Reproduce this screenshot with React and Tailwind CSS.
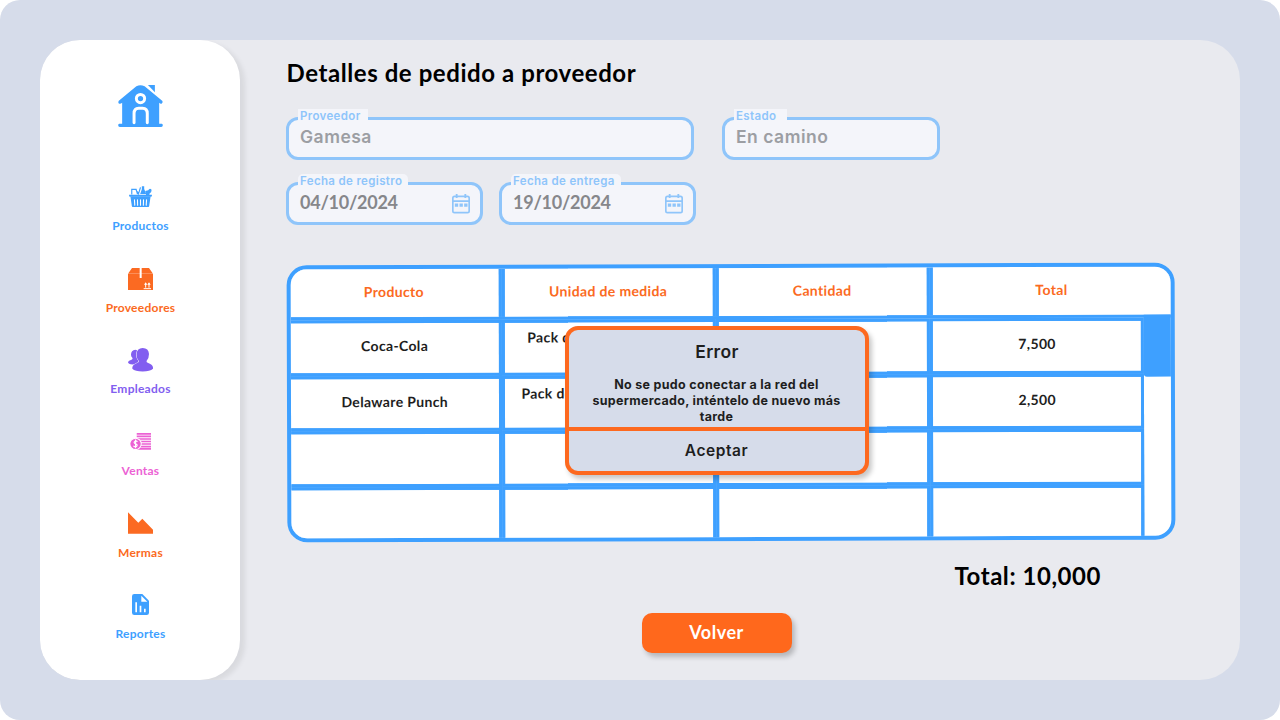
import React from "react";

const HomeIcon = () => (
  <svg viewBox="0 0 135 127" className="h-[42px] w-[45px]" fill="#3ea0ff">
    <path d="M90 0h21v22z" />
    <path d="M55 4Q67-3 80 4L133 48Q136 52 132 56Q128 58 124 54V117H132Q135 118 135 122Q135 127 130 127H5Q0 127 0 122Q0 118 3 117H12V54Q7 58 2 56Q-1 52 2 48Z" />
    <circle cx="67.500" cy="41" r="12.500" fill="none" stroke="#fff" strokeWidth="9" />
    <path d="M48 114V86Q48 70 62 70H74Q88 70 88 86V114" fill="none" stroke="#fff" strokeWidth="9" strokeLinecap="round" />
  </svg>
);

const BasketIcon = () => (
  <svg viewBox="0 0 68 64" className="h-[21.500px] w-[23px]" fill="#3ea0ff">
    <path d="M0 26H68V29Q68 32 65 32H3Q0 32 0 29Z" />
    <path d="M4 31H64L60 58Q59 64 54 64H14Q9 64 8 58Z" />
    <path d="M16 41l1 16M25 41l.5 16M34 41v16M43 41l-.5 16M52 41l-1 16" stroke="#fff" strokeWidth="3.200" strokeLinecap="round" />
    <path d="M8 25V10H21L25 24M20 10L28 23L34 4" fill="none" stroke="#3ea0ff" strokeWidth="3.500" />
    <path d="M38 1h7v8l6 15H33l5-14z" />
    <path d="M48 15l9-2q4-8 9-3q3 8-5 12l-1 6h-9z" />
  </svg>
);

const BoxIcon = () => (
  <svg viewBox="0 0 75 66" className="mt-px h-[22px] w-[25px]" fill="#fb6a22">
    <path d="M12 0H35V17H0ZM41 0H63L75 17H41Z" />
    <path d="M0 18H35V30H41V18H75V66H0Z" />
    <path d="M47 62h22M53 59v-13M63 59v-13" stroke="#fff" strokeWidth="3" />
    <path d="M48 50l5-7 5 7zM58 50l5-7 5 7z" fill="#fff" />
  </svg>
);

const PeopleIcon = () => (
  <svg viewBox="0 0 75 70" className="h-[23.500px] w-[25px]" fill="#825ef0">
    <path d="M9 20Q9 6 22 5Q32 6 34 18L30 47L14 49Q0 49 0 42Q1 37 12 34Q15 32 13 29Q9 26 9 20Z" />
    <path
      d="M26 18Q27 0 44 0Q62 0 63 18Q63 31 56 38Q54 43 59 44Q74 49 75 58V62Q66 70 44 70Q21 70 13 62V58Q14 49 29 44Q34 43 32 38Q25 30 26 18Z"
      stroke="#fff"
      strokeWidth="3"
      paintOrder="stroke"
    />
  </svg>
);

const SalesIcon = () => (
  <svg viewBox="0 0 64 50" className="h-[17px] w-[21.500px]" fill="#ec62d4">
    <path d="M20 2.500H64M20 10H64M20 17.500H64M20 25H64M20 32.500H64M20 40H64M20 47H64" stroke="#ec62d4" strokeWidth="5" />
    <circle cx="16.500" cy="32" r="17" stroke="#fff" strokeWidth="3" />
    <path d="M22 26Q19 22 15 24Q9 28 16 32Q24 34 20 39Q15 43 10 38M16.500 19V45" fill="none" stroke="#fff" strokeWidth="3.500" />
  </svg>
);

const LossIcon = () => (
  <svg viewBox="0 0 75 65" className="h-[22px] w-[25px]" fill="#fb6a22">
    <path d="M0 0L31 32L43 20L75 53V65H0Z" />
  </svg>
);

const ReportIcon = () => (
  <svg viewBox="0 0 51 63" className="h-[21px] w-[17px]">
    <path d="M7 0H31L51 20V56Q51 63 44 63H7Q0 63 0 56V7Q0 0 7 0Z" fill="#3ea0ff" />
    <path d="M28 5V23H46Z" fill="#fff" />
    <path d="M12.500 25V55M25.500 35V55M38.500 44V55" stroke="#fff" strokeWidth="5" />
  </svg>
);

const CalendarIcon = () => (
  <svg viewBox="0 0 54 58" className="mt-px h-[19.500px] w-[18px]" fill="none" stroke="#8fc5fa">
    <rect x="2.500" y="7" width="49" height="48.500" rx="5" strokeWidth="5" />
    <path d="M2 21H52M14 0V12M40 0V12" strokeWidth="5.500" />
    <path d="M8.500 33H46.500" strokeWidth="10" strokeDasharray="10 4" />
  </svg>
);

const menu = [
  { label: "Productos", Icon: BasketIcon, color: "text-[#3ea0ff]" },
  { label: "Proveedores", Icon: BoxIcon, color: "text-[#fb6a22]" },
  { label: "Empleados", Icon: PeopleIcon, color: "text-[#825ef0]" },
  { label: "Ventas", Icon: SalesIcon, color: "text-[#ec62d4]" },
  { label: "Mermas", Icon: LossIcon, color: "text-[#fb6a22]" },
  { label: "Reportes", Icon: ReportIcon, color: "text-[#3ea0ff]" },
];

const Sidebar = () => (
  <nav className="flex h-full w-[200px] shrink-0 flex-col items-center rounded-[40px] bg-white pt-[45px] shadow-[5px_3px_5px_rgba(0,0,0,0.07)]">
    <HomeIcon />
    <ul className="mt-[56px] flex flex-col items-center pl-px">
      {menu.map(({ label, Icon, color }) => (
        <li key={label} className="flex h-[81.700px] flex-col items-center">
          <span className="flex h-7 items-center pb-px">
            <Icon />
          </span>
          <span className={`font-[Lato,sans-serif] text-[12px] leading-[30px] font-bold tracking-[0.25px] ${color}`}>{label}</span>
        </li>
      ))}
    </ul>
  </nav>
);

const Field = ({ label, value, size, patch, valueStyle, calendar }) => (
  <div className={`relative flex h-[43.500px] items-center justify-between rounded-[12px] border-3 border-[#8fc5fa] bg-[#f4f5fa] pr-[10px] pl-[11.500px] ${size}`}>
    <span className={`absolute -top-[10.500px] left-[9.500px] h-[15px] bg-[#f4f5fa] pl-[2px] font-[Inter,sans-serif] text-[11.500px] leading-[15px] font-semibold tracking-[0.350px] whitespace-nowrap text-[#8fc5fa] ${patch}`}>
      {label}
    </span>
    <span className={`-mt-[2px] ${valueStyle}`}>{value}</span>
    {calendar && <CalendarIcon />}
  </div>
);

const textValue = "font-[Inter,sans-serif] text-[17.500px] font-semibold tracking-[0.5px] text-[#9c9ea3]";
const dateValue = "font-[Lato,sans-serif] text-[18px] font-bold tracking-[-0.250px] text-[#86878b]";

const products = [
  { name: "Coca-Cola", unit: "Pack de", unitPad: "pl-[23px]", total: "7,500" },
  { name: "Delaware Punch", unit: "Pack de", unitPad: "pl-[17px]", total: "2,500" },
  { name: "", unit: "", unitPad: "", total: "" },
  { name: "", unit: "", unitPad: "", total: "" },
];

const Table = () => (
  <div className="ml-[47px] h-[277px] w-[888px] rotate-[-0.18deg] overflow-hidden rounded-[20px] border-4 border-[#3ea0ff] bg-white font-[Lato,sans-serif] text-[14px] font-bold tracking-[0.350px]">
    <div className="grid h-[51px] grid-cols-[210.500px_214px_214px_1fr] border-b-3 border-[#3ea0ff] bg-[#6cb6ff] text-center leading-[46px] text-[#fb6a22]">
      <span className="border-r-3 border-[#3ea0ff] bg-white bg-clip-padding pr-px">Producto</span>
      <span className="border-x-3 border-[#3ea0ff] bg-white bg-clip-padding">Unidad de medida</span>
      <span className="border-x-3 border-[#3ea0ff] bg-white bg-clip-padding">Cantidad</span>
      <span className="border-l-3 border-[#3ea0ff] bg-white bg-clip-padding">Total</span>
    </div>
    <div className="flex">
      <div className="w-[853px] shrink-0 bg-[#6cb6ff] text-[#1e1e1e]">
        {products.map((p, i) => (
          <div key={i} className="grid h-[55.500px] grid-cols-[210.500px_214px_214px_214.500px] text-center leading-[46px]">
            <span className="border-y-3 border-r-3 border-[#3ea0ff] bg-white bg-clip-padding">{p.name}</span>
            <span className={`border-3 border-[#3ea0ff] bg-white bg-clip-padding text-left leading-[29px] ${p.unitPad}`}>{p.unit}</span>
            <span className="border-3 border-[#3ea0ff] bg-white bg-clip-padding" />
            <span className="border-3 border-[#3ea0ff] bg-white bg-clip-padding pl-px">{p.total}</span>
          </div>
        ))}
      </div>
      <div className="-mt-[3px] -mr-px h-[61.500px] flex-1 rounded-bl-[3px] bg-[#3ea0ff]" />
    </div>
  </div>
);

const ErrorDialog = () => (
  <div
    role="alertdialog"
    className="absolute top-[325.500px] left-[565px] flex h-[149.500px] w-[304px] flex-col rounded-[13px] border-4 border-[#fd691f] bg-[#d6dcea] text-center font-[Inter,sans-serif] text-[#1e1e1e] shadow-[3px_4px_5px_rgba(0,0,0,0.22)]"
  >
    <h2 className="pt-[10.500px] text-[17.500px] leading-[24px] font-semibold tracking-[0.3px]">Error</h2>
    <p className="mt-[12.500px] pr-px text-[12.500px] leading-[16px] font-bold tracking-[0.3px]">
      No se pudo conectar a la red del
      <br />
      supermercado, inténtelo de nuevo más
      <br />
      tarde
    </p>
    <button className="mt-auto h-[44px] border-t-4 border-[#fd691f] pr-px text-[15.500px] leading-[38px] font-semibold tracking-[0.550px]">Aceptar</button>
  </div>
);

export default function App() {
  return (
    <div className="h-[720px] w-[1280px] overflow-hidden bg-white">
      <div className="relative h-full rounded-[20px] bg-[#d6dcea] p-10">
        <div className="flex h-full overflow-hidden rounded-[40px] bg-[#e9eaef]">
          <Sidebar />
          <main className="flex flex-1 flex-col">
            <h1 className="mt-[15px] ml-[46.500px] font-[Lato,sans-serif] text-[24px] leading-[36px] font-bold tracking-[0.570px] text-black">
              Detalles de pedido a proveedor
            </h1>
            <div className="mt-[25.500px] ml-[45.500px] flex gap-[27.500px]">
              <Field label="Proveedor" value="Gamesa" size="w-[408.500px]" patch="w-[70px]" valueStyle={textValue} />
              <Field label="Estado" value="En camino" size="w-[218.500px]" patch="w-[53px]" valueStyle={textValue} />
            </div>
            <div className="mt-[21.500px] ml-[45.500px] flex gap-[15.500px]">
              <Field label="Fecha de registro" value="04/10/2024" size="w-[197.500px]" patch="w-[110px] rounded-t-[5px]" valueStyle={dateValue} calendar />
              <Field label="Fecha de entrega" value="19/10/2024" size="w-[197.500px]" patch="w-[110px] rounded-t-[5px]" valueStyle={dateValue} calendar />
            </div>
            <div className="mt-[39px]">
              <Table />
            </div>
            <p className="mt-[17px] ml-[714.500px] font-[Lato,sans-serif] text-[24px] leading-[36px] font-bold tracking-[0.550px] text-black">Total: 10,000</p>
            <button className="mt-[19px] ml-[401.500px] h-[40px] w-[150px] rounded-[10px] bg-[#ff681c] pb-[2px] font-[Lato,sans-serif] text-[18px] font-bold tracking-[0.5px] text-white shadow-[3px_4px_5px_rgba(0,0,0,0.22)]">
              Volver
            </button>
          </main>
        </div>
        <ErrorDialog />
      </div>
    </div>
  );
}
